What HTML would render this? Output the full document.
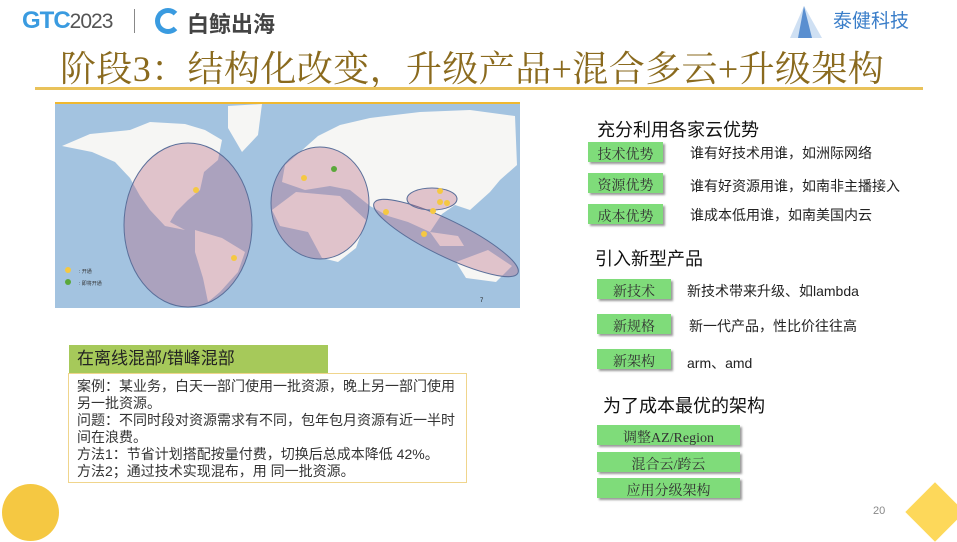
<!DOCTYPE html>
<html><head><meta charset="utf-8"><style>
*{margin:0;padding:0;box-sizing:border-box}
body{width:957px;height:539px;position:relative;background:#fff;overflow:hidden;font-family:"Liberation Sans","Noto Sans CJK SC",sans-serif;color:#222}
.a{position:absolute;white-space:nowrap}
.btn{position:absolute;background:#7fdc7a;box-shadow:2px 2px 2px #9a9a9a;font-family:"Liberation Serif","Noto Serif CJK SC",serif;font-size:14px;color:#333;height:20px;text-align:center;line-height:20px}
.btn span{position:relative;top:4px}
.h{font-size:18px;color:#111}
.d{font-size:14px;color:#222}
</style></head><body>
<div class="a" style="left:22px;top:7px;font-size:24px;font-weight:bold;color:#3a9be0;letter-spacing:-1px">GTC<span style="font-weight:normal;color:#555;font-size:21px">2023</span></div>
<div class="a" style="left:134px;top:9px;width:1px;height:24px;background:#888"></div>
<div class="a" style="left:155px;top:8px;width:26px;height:26px;border-radius:50%;border:5px solid #3a9be0;border-right-color:transparent"></div>
<div class="a" style="left:187px;top:7px;font-size:22px;font-weight:bold;color:#444">白鲸出海</div>
<svg class="a" style="left:782px;top:4px" width="48" height="36"><path d="M22 2 L8 34 L40 34 Z" fill="#cfe0f3"/><path d="M22 2 L16 34 L30 34 Z" fill="#5a8fd0"/></svg>
<div class="a" style="left:833px;top:6px;font-size:19px;color:#3a7ec9">泰健科技</div>
<div class="a" style="left:60px;top:41px;font-size:36px;letter-spacing:0.4px;color:#8a6a1e;font-family:'Liberation Serif','Noto Serif CJK SC',serif">阶段3：结构化改变，升级产品+混合多云+升级架构</div>
<div class="a" style="left:35px;top:87px;width:888px;height:3px;background:#e9c25a"></div>

<svg class="a" style="left:55px;top:102px" width="465" height="206" viewBox="55 102 465 206">
<rect x="55" y="102" width="465" height="206" fill="#a3c3e0"/>
<rect x="55" y="102" width="465" height="2" fill="#f0b830"/>
<g fill="#f6f6f4">
<path d="M62 146 L90 134 L130 130 L150 122 L185 124 L205 130 L222 140 L218 160 L204 172 L200 190 L188 200 L176 212 L170 222 L185 230 L165 226 L150 210 L140 196 L130 178 L115 162 L92 152Z"/>
<path d="M195 230 L222 238 L245 252 L238 272 L220 292 L208 302 L203 278 L195 252Z"/>
<path d="M228 106 L262 104 L258 135 L242 152 L228 128Z"/>
<path d="M282 182 L285 165 L300 152 L318 136 L340 125 L370 118 L420 112 L470 110 L515 116 L517 165 L500 180 L490 192 L470 210 L455 205 L442 214 L430 232 L408 222 L388 216 L370 206 L350 190 L330 186 L305 190Z"/>
<path d="M272 210 L296 192 L340 196 L366 220 L356 248 L338 262 L322 258 L308 232 L280 226Z"/>
<path d="M456 262 L488 250 L512 266 L496 282 L466 278Z"/>
<path d="M430 232 L458 236 L464 246 L440 246Z"/>
</g>
<g fill="rgba(185,105,130,0.36)" stroke="#5a6f9a" stroke-width="1">
<ellipse cx="188" cy="225" rx="64" ry="82"/>
<ellipse cx="320" cy="203" rx="49" ry="56"/>
<ellipse cx="446" cy="238" rx="80" ry="18" transform="rotate(26 446 238)"/>
<ellipse cx="432" cy="199" rx="25" ry="11"/>
</g>
<g fill="#f5c842"><circle cx="196" cy="190" r="3"/><circle cx="234" cy="258" r="3"/><circle cx="304" cy="178" r="3"/><circle cx="386" cy="212" r="3"/><circle cx="424" cy="234" r="3"/><circle cx="440" cy="202" r="3"/><circle cx="447" cy="203" r="3"/><circle cx="433" cy="211" r="3"/><circle cx="440" cy="191" r="3"/><circle cx="68" cy="270" r="3"/></g>
<g fill="#5aa83a"><circle cx="334" cy="169" r="3"/><circle cx="68" cy="282" r="3"/></g>
<text x="79" y="273" font-size="5" fill="#333">: 开通</text><text x="79" y="285" font-size="5" fill="#333">: 即将开通</text>
<text x="480" y="302" font-size="6" fill="#222">7</text>
</svg>

<div class="a" style="left:69px;top:345px;width:259px;height:28px;background:#a6c95a;font-size:17px;padding-left:8px;line-height:28px;color:#222">在离线混部/错峰混部</div>
<div class="a" style="left:68px;top:373px;width:399px;height:110px;border:1px solid #f0d58c;padding:4px 0 0 8px;font-size:14px;line-height:17px;white-space:normal;color:#333">案例：某业务，白天一部门使用一批资源，晚上另一部门使用另一批资源。<br>问题：不同时段对资源需求有不同，包年包月资源有近一半时间在浪费。<br>方法1：节省计划搭配按量付费，切换后总成本降低 42%。<br>方法2；通过技术实现混布，用 同一批资源。</div>

<div class="a h" style="left:597px;top:116px">充分利用各家云优势</div>
<div class="btn" style="left:588px;top:142px;width:75px"><span>技术优势</span></div>
<div class="btn" style="left:588px;top:173px;width:75px"><span>资源优势</span></div>
<div class="btn" style="left:588px;top:204px;width:75px"><span>成本优势</span></div>
<div class="a d" style="left:690px;top:143px">谁有好技术用谁，如洲际网络</div>
<div class="a d" style="left:690px;top:176px">谁有好资源用谁，如南非主播接入</div>
<div class="a d" style="left:690px;top:205px">谁成本低用谁，如南美国内云</div>

<div class="a h" style="left:595px;top:245px">引入新型产品</div>
<div class="btn" style="left:597px;top:279px;width:74px"><span>新技术</span></div>
<div class="btn" style="left:597px;top:314px;width:74px"><span>新规格</span></div>
<div class="btn" style="left:597px;top:349px;width:74px"><span>新架构</span></div>
<div class="a d" style="left:687px;top:281px">新技术带来升级、如lambda</div>
<div class="a d" style="left:689px;top:316px">新一代产品，性比价往往高</div>
<div class="a d" style="left:687px;top:353px">arm、amd</div>

<div class="a h" style="left:603px;top:392px">为了成本最优的架构</div>
<div class="btn" style="left:597px;top:425px;width:143px"><span>调整AZ/Region</span></div>
<div class="btn" style="left:597px;top:452px;width:143px"><span>混合云/跨云</span></div>
<div class="btn" style="left:597px;top:478px;width:143px"><span>应用分级架构</span></div>

<div class="a" style="left:2px;top:484px;width:57px;height:57px;border-radius:50%;background:#f5c842"></div>
<div class="a" style="left:873px;top:505px;font-size:11px;color:#888">20</div>
<div class="a" style="left:914px;top:491px;width:42px;height:42px;background:#fdd85a;transform:rotate(45deg)"></div>
</body></html>
